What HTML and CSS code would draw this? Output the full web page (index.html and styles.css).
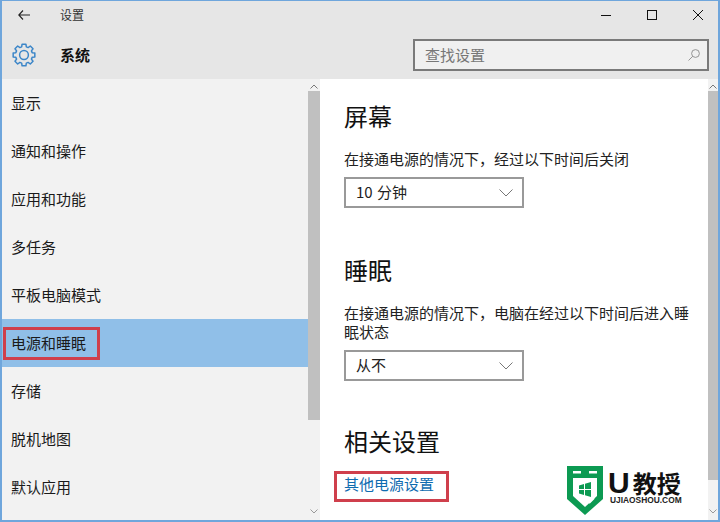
FILE: index.html
```html
<!DOCTYPE html>
<html lang="zh-CN">
<head>
<meta charset="utf-8">
<title>设置</title>
<link rel="stylesheet" href="styles.css">
</head>
<body>
<div class="window">
  <header class="header">
    <div class="title-row">
      <svg class="back" width="12" height="10" viewBox="0 0 12 10"><path d="M5 .5 .8 5 5 9.5M.8 5H12" fill="none" stroke="#222" stroke-width="1.1"/></svg>
      <span class="app-title">设置</span>
      <div class="controls">
        <svg width="10" height="10" viewBox="0 0 10 10"><path d="M0 5.500H10" stroke="#111" stroke-width="1"/></svg>
        <svg width="10" height="10" viewBox="0 0 10 10"><rect x=".5" y=".5" width="9" height="9" fill="none" stroke="#111" stroke-width="1"/></svg>
        <svg width="10" height="10" viewBox="0 0 10 10"><path d="M0 0 10 10M10 0 0 10" stroke="#111" stroke-width="1"/></svg>
      </div>
    </div>
    <div class="section-row">
      <svg class="gear" width="24" height="24" viewBox="-12 -12 24 24"><polygon points="8.17,-2.34 10.83,-1.91 10.83,1.91 8.17,2.34 7.43,4.12 9.01,6.31 6.31,9.01 4.12,7.43 2.34,8.17 1.91,10.83 -1.91,10.83 -2.34,8.17 -4.12,7.43 -6.31,9.01 -9.01,6.31 -7.43,4.12 -8.17,2.34 -10.83,1.91 -10.83,-1.91 -8.17,-2.34 -7.43,-4.12 -9.01,-6.31 -6.31,-9.01 -4.12,-7.43 -2.34,-8.17 -1.91,-10.83 1.91,-10.83 2.34,-8.17 4.12,-7.43 6.31,-9.01 9.01,-6.31 7.43,-4.12" fill="none" stroke="#3c86c8" stroke-width="1.5" stroke-linejoin="round"/><circle r="4.4" fill="none" stroke="#3c86c8" stroke-width="1.5"/></svg>
      <span class="section-title">系统</span>
      <div class="search">
        <span class="search-text">查找设置</span>
        <svg width="12" height="12" viewBox="0 0 12 12"><circle cx="7.5" cy="4.5" r="3.9" fill="none" stroke="#8a8a8a" stroke-width=".9"/><path d="M4.7 7.300 .5 11.500" stroke="#8a8a8a" stroke-width=".9"/></svg>
      </div>
    </div>
  </header>
  <div class="body">
    <nav class="sidebar">
      <ul class="nav-list">
        <li class="nav-item">显示</li>
        <li class="nav-item">通知和操作</li>
        <li class="nav-item">应用和功能</li>
        <li class="nav-item">多任务</li>
        <li class="nav-item">平板电脑模式</li>
        <li class="nav-item active">电源和睡眠<span class="mark mark-nav"></span></li>
        <li class="nav-item">存储</li>
        <li class="nav-item">脱机地图</li>
        <li class="nav-item">默认应用</li>
      </ul>
      <div class="scrollbar side-scroll">
        <svg class="arrow" width="8" height="5" viewBox="0 0 8 5"><path d="M.5 4.500 4 1l3.500 3.500" fill="none" stroke="#777" stroke-width="1"/></svg>
        <div class="thumb thumb-side"></div>
        <svg class="arrow arrow-down" width="8" height="5" viewBox="0 0 8 5"><path d="M.5.5 4 4 7.500.5" fill="none" stroke="#999" stroke-width="1"/></svg>
      </div>
    </nav>
    <main class="main">
      <div class="content">
        <h2 class="heading first">屏幕</h2>
        <p class="desc">在接通电源的情况下，经过以下时间后关闭</p>
        <div class="select"><span class="select-text">10 分钟</span><svg width="14" height="8" viewBox="0 0 14 8"><path d="M.5.5 7 7 13.500.5" fill="none" stroke="#777" stroke-width="1"/></svg></div>
        <h2 class="heading sleep">睡眠</h2>
        <p class="desc">在接通电源的情况下，电脑在经过以下时间后进入睡眠状态</p>
        <div class="select"><span class="select-text">从不</span><svg width="14" height="8" viewBox="0 0 14 8"><path d="M.5.5 7 7 13.500.5" fill="none" stroke="#777" stroke-width="1"/></svg></div>
        <h2 class="heading related">相关设置</h2>
        <div class="link-row"><a class="link" href="#">其他电源设置<span class="mark mark-link"></span></a></div>
      </div>
      <div class="scrollbar main-scroll">
        <svg class="arrow" width="8" height="5" viewBox="0 0 8 5"><path d="M.5 4.500 4 1l3.500 3.500" fill="none" stroke="#777" stroke-width="1"/></svg>
        <div class="thumb thumb-main"></div>
        <svg class="arrow arrow-down" width="8" height="5" viewBox="0 0 8 5"><path d="M.5.5 4 4 7.500.5" fill="none" stroke="#999" stroke-width="1"/></svg>
      </div>
    </main>
  </div>
  <div class="logo">
    <svg width="36" height="49" viewBox="0 0 36 49">
      <path d="M0 0H36V33L18 49 0 33Z" fill="#0c9a52"/>
      <path d="M6 12H30V30L18 41 6 30Z" fill="#fff"/>
      <rect x="6" y="5" width="8" height="2.500" fill="#fff"/>
      <rect x="22" y="5" width="8" height="2.500" fill="#fff"/>
      <path d="M12 19.500 17 18V23H12ZM18 17.800 24 16V23H18ZM12 24H17V29L12 27.500ZM18 24H24V31L18 29.200Z" fill="#0c9a52"/>
      <path d="M22 37 27 32" stroke="#fff" stroke-width="2"/>
    </svg>
    <div class="logo-text">
      <div class="logo-name"><span class="logo-u">U</span>教授</div>
      <div class="logo-url">UJIAOSHOU.COM</div>
    </div>
  </div>
</div>
</body>
</html>
```
FILE: styles.css
```css
* { box-sizing: border-box; }
html, body { margin: 0; padding: 0; }
body {
  width: 720px;
  height: 522px;
  overflow: hidden;
  background: #fff;
  font-family: "Noto Sans CJK SC", "Open Sans", sans-serif;
  color: #1a1a1a;
}
.window {
  position: relative;
  width: 720px;
  height: 522px;
  display: flex;
  flex-direction: column;
  border-top: 1px solid #6fa6dc;
  border-left: 2px solid #6fa6dc;
  border-right: 2px solid #6fa6dc;
  border-bottom: 2px solid #6fa6dc;
  background: #fff;
}
.header {
  height: 78px;
  flex: none;
  background: #e6e6e6;
}
.title-row {
  height: 27px;
  display: flex;
  align-items: center;
  padding-left: 16px;
}
.back { flex: none; }
.app-title {
  margin-left: 30px;
  font-size: 12px;
  color: #333;
}
.controls {
  margin-left: auto;
  display: flex;
  gap: 36px;
  padding-right: 15px;
}
.section-row {
  height: 51px;
  display: flex;
  align-items: center;
  padding: 3px 0 0 10px;
}
.gear { flex: none; }
.section-title {
  margin-left: 24px;
  padding-bottom: 2px;
  font-size: 15px;
  font-weight: 700;
  color: #111;
}
.search {
  margin-left: auto;
  margin-right: 9px;
  width: 296px;
  height: 32px;
  display: flex;
  align-items: center;
  justify-content: space-between;
  padding: 0 7px 0 10px;
  border: 2px solid #7a7a7a;
  background: #f0f0f0;
}
.search-text {
  padding-bottom: 2px;
  font-size: 15px;
  color: #777;
}
.body {
  flex: 1;
  min-height: 0;
  display: flex;
}
.sidebar {
  width: 318px;
  flex: none;
  display: flex;
  background: #f2f2f2;
}
.nav-list {
  flex: 1;
  margin: 0;
  padding: 0;
  list-style: none;
}
.nav-item {
  position: relative;
  height: 48px;
  display: flex;
  align-items: center;
  padding: 0 0 2px 9px;
  font-size: 15px;
  color: #1a1a1a;
}
.nav-item.active { background: #90bfe8; }
.mark {
  position: absolute;
  border: 3px solid #cf3f4c;
}
.mark-nav {
  left: 1px;
  top: 8px;
  width: 97px;
  height: 33px;
}
.scrollbar {
  width: 12px;
  flex: none;
  display: flex;
  flex-direction: column;
  align-items: center;
  background: #f2f2f2;
}
.arrow {
  flex: none;
  margin-top: 3px;
  height: 9px;
}
.thumb {
  width: 12px;
  background: #c0c0c0;
}
.thumb-side { height: 329px; }
.arrow-down {
  margin-top: auto;
  margin-bottom: 4px;
}
.main {
  flex: 1;
  min-width: 0;
  display: flex;
  background: #fff;
}
.content {
  flex: 1;
  min-width: 0;
  padding: 21px 10px 0 24px;
}
.heading {
  margin: 0;
  font-size: 24px;
  line-height: 32px;
  font-weight: 400;
  color: #111;
}
.heading.sleep { margin-top: 46px; }
.heading.related { margin-top: 44px; }
.desc {
  margin: 17px 0 0;
  font-size: 15px;
  line-height: 19px;
  color: #222;
}
.select {
  width: 180px;
  height: 31px;
  margin-top: 9px;
  display: flex;
  align-items: center;
  justify-content: space-between;
  padding: 0 9px 0 10px;
  border: 2px solid #999;
  background: #fff;
  font-size: 15px;
  color: #222;
}
.select-text {
  padding-bottom: 2px;
  word-spacing: 1px;
}
.link-row {
  margin-top: 16px;
  line-height: 20px;
}
.link {
  position: relative;
  display: inline-block;
  font-size: 15px;
  color: #0f6cb0;
  text-decoration: none;
}
.mark-link {
  left: -10px;
  top: -3px;
  width: 115px;
  height: 31px;
}
.main-scroll { width: 10px; }
.thumb-main { width: 10px; height: 389px; }
.logo {
  position: absolute;
  left: 565px;
  top: 465px;
  display: flex;
  gap: 7px;
}
.logo-text {
  display: flex;
  flex-direction: column;
  margin-top: 5px;
}
.logo-name {
  font-size: 24px;
  line-height: 23px;
  font-weight: 700;
  color: #111;
  white-space: nowrap;
}
.logo-u {
  margin-right: 3px;
  margin-left: -2px;
  font-family: "Liberation Sans", sans-serif;
  font-size: 30px;
}
.logo-url {
  margin-top: 2px;
  font-family: "Liberation Sans", sans-serif;
  font-size: 8.4px;
  line-height: 8px;
  font-weight: 700;
  color: #222;
  white-space: nowrap;
}
```
